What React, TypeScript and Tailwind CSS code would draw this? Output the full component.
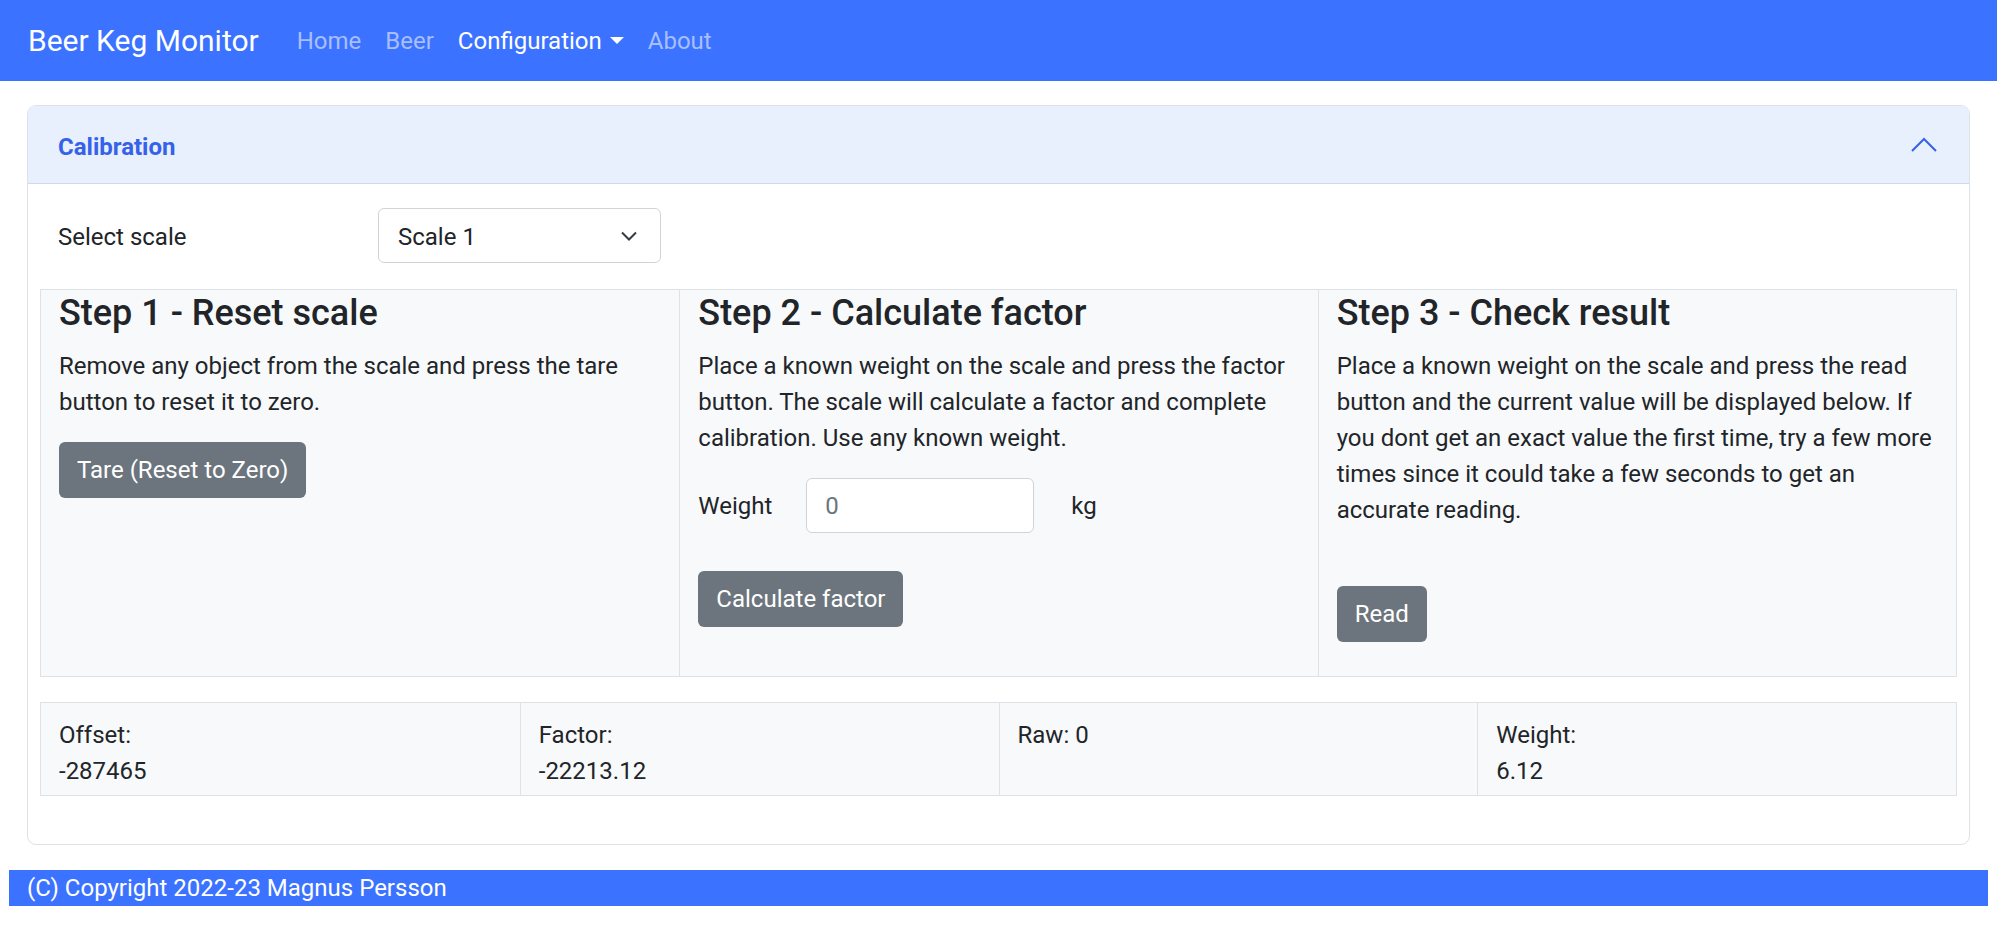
import { useState } from "react";

const font = { fontFamily: "Roboto, 'Noto Sans', sans-serif" };

function StepButton({ children }: { children: React.ReactNode }) {
  return (
    <button className="h-[56px] px-[18px] rounded-[6px] bg-[#6c757d] text-white text-[24px] leading-[36px]">
      {children}
    </button>
  );
}

export default function App() {
  const [scale, setScale] = useState("1");
  const [weight, setWeight] = useState("");

  return (
    <div className="min-h-[931px] bg-white text-[#212529]" style={font}>
      {/* Navbar */}
      <nav className="h-[81px] bg-[#3b72ff] flex items-center pl-[28px]">
        <span className="text-white text-[30px] leading-[45px] mr-[26px]">Beer Keg Monitor</span>
        <div className="flex items-center text-[24px] leading-[36px]">
          <a className="px-[12px] text-[#a7bfff]">Home</a>
          <a className="px-[12px] text-[#a7bfff]">Beer</a>
          <a className="px-[12px] text-white flex items-center">
            Configuration
            <span className="ml-[8px] w-0 h-0 border-l-[7px] border-r-[7px] border-t-[7px] border-l-transparent border-r-transparent border-t-white" />
          </a>
          <a className="px-[12px] text-[#a7bfff]">About</a>
        </div>
      </nav>

      {/* Calibration card */}
      <div className="mt-[24px] mx-[27px] border border-[#dee2e6] rounded-[9px]">
        <div className="h-[78px] bg-[#e8effd] rounded-t-[8px] border-b border-[#d0d9e7] flex items-center justify-between pl-[30px] pr-[32px]">
          <span className="pt-[4px] text-[24px] font-bold text-[#3562e8]">Calibration</span>
          <svg width="26" height="15" viewBox="0 0 26 15" fill="none">
            <path d="M1 14 L13 2 L25 14" stroke="#3562e8" strokeWidth="2" />
          </svg>
        </div>

        <div className="pt-[24px] pb-[48px]">
          {/* Select scale */}
          <div className="flex items-center pl-[30px]">
            <label className="w-[320px] pt-[3px] text-[24px] leading-[36px]">Select scale</label>
            <div className="relative">
              <select
                value={scale}
                onChange={(e) => setScale(e.target.value)}
                className="appearance-none w-[283px] h-[55px] border border-[#ced4da] rounded-[6px] bg-white pl-[19px] pt-[2px] text-[24px] leading-[36px] outline-none"
                style={font}
              >
                <option value="1">Scale 1</option>
                <option value="2">Scale 2</option>
              </select>
              <svg className="absolute right-[24px] top-[23px] pointer-events-none" width="16" height="10" viewBox="0 0 16 10" fill="none">
                <path d="M1 1.5 L8 8.5 L15 1.5" stroke="#343a40" strokeWidth="2" />
              </svg>
            </div>
          </div>

          {/* Steps */}
          <div className="mt-[26px] mx-[12px] grid grid-cols-3 h-[388px] border border-[#dee2e6] bg-[#f8f9fa]">
            <div className="px-[18px]">
              <h4 className="text-[36px] leading-[43px] font-medium mt-[2px] mb-[13px]">Step 1 - Reset scale</h4>
              <p className="text-[24px] leading-[36px] mb-[22px]">
                Remove any object from the scale and press the tare button to reset it to zero.
              </p>
              <StepButton>Tare (Reset to Zero)</StepButton>
            </div>

            <div className="px-[18px] border-l border-[#dee2e6]">
              <h4 className="text-[36px] leading-[43px] font-medium mt-[2px] mb-[13px]">Step 2 - Calculate factor</h4>
              <p className="text-[24px] leading-[36px] mb-[22px]">
                Place a known weight on the scale and press the factor button. The scale will calculate a factor and complete calibration. Use any known weight.
              </p>
              <div className="flex items-center text-[24px] leading-[36px]">
                <label className="w-[108px]">Weight</label>
                <input
                  value={weight}
                  onChange={(e) => setWeight(e.target.value)}
                  placeholder="0"
                  className="w-[228px] h-[55px] border border-[#ced4da] rounded-[6px] bg-white pl-[18px] text-[24px] placeholder:text-[#6c757d] outline-none"
                  style={font}
                />
                <span className="ml-[37px]">kg</span>
              </div>
              <div className="mt-[38px]">
                <StepButton>Calculate factor</StepButton>
              </div>
            </div>

            <div className="px-[18px] border-l border-[#dee2e6]">
              <h4 className="text-[36px] leading-[43px] font-medium mt-[2px] mb-[13px]">Step 3 - Check result</h4>
              <p className="text-[24px] leading-[36px] mb-[58px]">
                Place a known weight on the scale and press the read button and the current value will be displayed below. If you dont get an exact value the first time, try a few more times since it could take a few seconds to get an accurate reading.
              </p>
              <StepButton>Read</StepButton>
            </div>
          </div>

          {/* Values */}
          <div className="mt-[25px] mx-[12px] grid grid-cols-4 border border-[#dee2e6] bg-[#f8f9fa] text-[24px] leading-[36px]">
            <div className="pl-[18px] pt-[14px] pb-[6px]">
              <div>Offset:</div>
              <div>-287465</div>
            </div>
            <div className="pl-[18px] pt-[14px] pb-[6px] border-l border-[#dee2e6]">
              <div>Factor:</div>
              <div>-22213.12</div>
            </div>
            <div className="pl-[18px] pt-[14px] pb-[6px] border-l border-[#dee2e6]">
              <div>Raw: 0</div>
            </div>
            <div className="pl-[18px] pt-[14px] pb-[6px] border-l border-[#dee2e6]">
              <div>Weight:</div>
              <div>6.12</div>
            </div>
          </div>
        </div>
      </div>

      {/* Footer */}
      <footer className="mt-[25px] mx-[9px] h-[36px] bg-[#3b72ff] pl-[18px] text-white text-[24px] leading-[36px]">
        (C) Copyright 2022-23 Magnus Persson
      </footer>
    </div>
  );
}
